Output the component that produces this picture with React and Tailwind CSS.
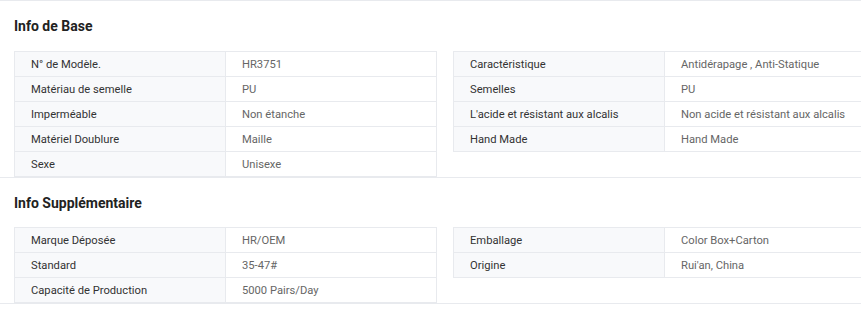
export default function App() {
  const base = {
    left: [
      ["N° de Modèle.", "HR3751"],
      ["Matériau de semelle", "PU"],
      ["Imperméable", "Non étanche"],
      ["Matériel Doublure", "Maille"],
      ["Sexe", "Unisexe"],
    ],
    right: [
      ["Caractéristique", "Antidérapage , Anti-Statique"],
      ["Semelles", "PU"],
      ["L'acide et résistant aux alcalis", "Non acide et résistant aux alcalis"],
      ["Hand Made", "Hand Made"],
    ],
  };
  const extra = {
    left: [
      ["Marque Déposée", "HR/OEM"],
      ["Standard", "35-47#"],
      ["Capacité de Production", "5000 Pairs/Day"],
    ],
    right: [
      ["Emballage", "Color Box+Carton"],
      ["Origine", "Rui'an, China"],
    ],
  };

  const Table = ({ rows }) => (
    <div className="w-[423px] shrink-0 border-t border-l border-r border-[#e8eaee]">
      {rows.map(([k, v]) => (
        <div key={k} className="flex h-[25px] border-b border-[#e8eaee]">
          <div className="w-[211px] shrink-0 bg-[#f8f9fb] border-r border-[#e8eaee] pl-[16px] pt-[2px] flex items-center text-[#333] whitespace-nowrap">
            {k}
          </div>
          <div className="flex-1 pl-[16px] pt-[2px] flex items-center text-[#666] whitespace-nowrap">
            {v}
          </div>
        </div>
      ))}
    </div>
  );

  const Section = ({ title, data, titleH }) => (
    <div className="border-b border-[#e8eaee]">
      <div className={`${titleH} flex items-center pl-[14px] pt-[1px] text-[14px] font-bold text-[#222]`}>
        {title}
      </div>
      <div className="flex items-start gap-[16px] pl-[14px]">
        <Table rows={data.left} />
        <Table rows={data.right} />
      </div>
    </div>
  );

  return (
    <div
      className="w-[861px] h-[314px] overflow-hidden bg-white border-t border-[#e8eaee] text-[11.2px]"
      style={{ fontFamily: "Roboto, 'Liberation Sans', sans-serif" }}
    >
      <Section title="Info de Base" data={base} titleH="h-[50px]" />
      <Section title="Info Supplémentaire" data={extra} titleH="h-[49px]" />
    </div>
  );
}
